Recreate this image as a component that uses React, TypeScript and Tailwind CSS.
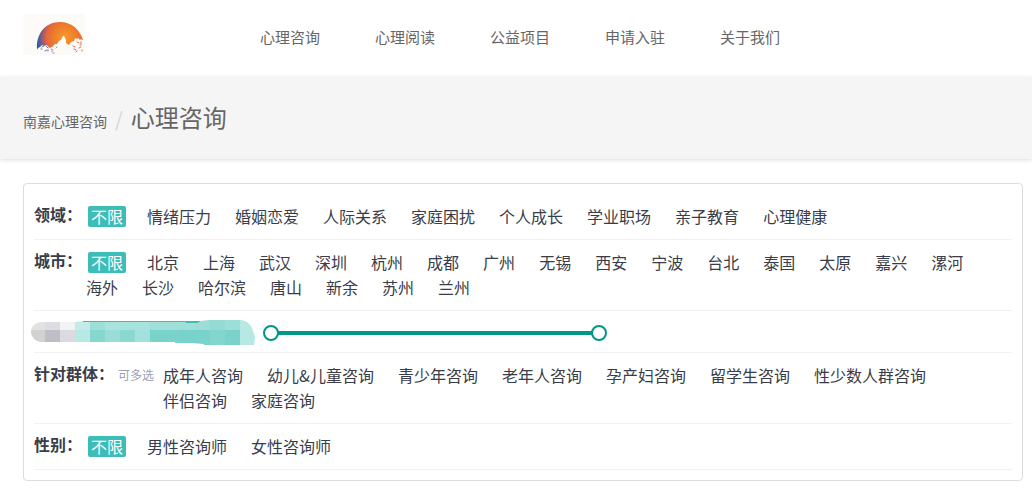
import { useState } from "react";

const navItems = ["心理咨询", "心理阅读", "公益项目", "申请入驻", "关于我们"];
const fields = ["不限", "情绪压力", "婚姻恋爱", "人际关系", "家庭困扰", "个人成长", "学业职场", "亲子教育", "心理健康"];
const cities = [
  "不限", "北京", "上海", "武汉", "深圳", "杭州", "成都", "广州", "无锡", "西安", "宁波", "台北",
  "泰国", "太原", "嘉兴", "漯河", "海外", "长沙", "哈尔滨", "唐山", "新余", "苏州", "兰州",
];
const groups = [
  "成年人咨询", "幼儿&儿童咨询", "青少年咨询", "老年人咨询", "孕产妇咨询", "留学生咨询",
  "性少数人群咨询", "伴侣咨询", "家庭咨询",
];
const genders = ["不限", "男性咨询师", "女性咨询师"];

function Logo() {
  return (
    <svg width="62" height="41" viewBox="0 0 62 41" role="img" aria-label="南嘉心理咨询">
      <defs>
        <radialGradient id="sun" gradientUnits="userSpaceOnUse" cx="42" cy="23" r="31">
          <stop offset="0" stopColor="#f59a2c" />
          <stop offset="0.4" stopColor="#ee7a2b" />
          <stop offset="0.6" stopColor="#e2673a" />
          <stop offset="0.75" stopColor="#8d5a7c" />
          <stop offset="0.9" stopColor="#2c5fae" />
          <stop offset="1" stopColor="#1c55a8" />
        </radialGradient>
      </defs>
      <rect width="62" height="41" fill="#fdfbf7" />
      <path d="M14 35C13 19 23 8 37 8c12 0 20 8 23 18l1 7-1 3H14Z" fill="url(#sun)" />
      <path
        d="M14 36l1-2 2-1 2-2 2 1 2-1 2 1 1 2 3-1 3-3 2 0 2-3 2-1 2-4 1 0 2 4 0 3 3 2 2-3 3-1 1-3 2 1 1-1 2 2 1-1 1 1 2 0v15H14Z"
        fill="#fdfbf7"
      />
      <g fill="none" strokeLinecap="round" strokeWidth="1">
        <path d="M19 33l2-1M23 32l2 2M22 37l2-1M18 35h1M25 36v1" stroke="#6471a9" />
        <path d="M28 35l2 1M30 39h1M33 34l1-1M29 37v1" stroke="#c47d98" />
        <path d="M50 32l2 1M54 28l2 1M58 28v2M51 35l2 1M56 34l2-1M53 38l1-1M59 36v1M57 31h1" stroke="#dc6a50" />
      </g>
    </svg>
  );
}

const topCells = ["#e2e2e3", "#dcdce2", "#f2f3f3", "#c3ece9", "#9adfd8", "#a9e3df", "#a6e3de", "#a6e3de", "#9fdfd9", "#9fdfd9", "#9fdfd9", "#9cddd7", "#93dbd4", "#9cded8", "#b6e8e4"];
const bottomCells = ["#d2d2d3", "#bebfc6", "#dbdae0", "#b8e9e5", "#86d7cf", "#9addd7", "#8ad8d1", "#a3e2dc", "#79d3cb", "#79d3cb", "#77d2ca", "#79d3cb", "#82d6ce", "#79d3cb", "#b6e8e4"];

function Mosaic() {
  return (
    <svg width="224" height="25" viewBox="0 0 224 25" className="shrink-0" aria-hidden="true">
      <defs>
        <clipPath id="brush">
          <path d="M11 2H44L53 1H169L179 0H210C216 1 221 5 222 11L224 17 223 25H173V24L160 23H144V22H11C5 22 0 17 0 12 0 6 5 2 11 2Z" />
        </clipPath>
      </defs>
      <g clipPath="url(#brush)">
        {topCells.map((fill, i) => (
          <rect key={i} x={i * 15 - 1} y="0" width="15" height="10" fill={fill} />
        ))}
        {bottomCells.map((fill, i) => (
          <rect key={i} x={i * 15 - 1} y="10" width="15" height="15" fill={fill} />
        ))}
        <path d="M52 1H169V2H167V3H155V2H52Z" fill="#3cbdb7" />
      </g>
    </svg>
  );
}

function Options({ items, multiple = false }: { items: string[]; multiple?: boolean }) {
  const [selected, setSelected] = useState<string[]>(multiple ? [] : [items[0]]);

  const choose = (item: string) => {
    if (!multiple) setSelected([item]);
    else setSelected((s) => (s.includes(item) ? s.filter((x) => x !== item) : [...s, item]));
  };

  return (
    <ul className="flex min-w-0 flex-1 flex-wrap gap-x-[18px]">
      {items.map((item) => (
        <li key={item} className={item === "不限" ? "ml-[5px] flex h-[25px] items-center" : "flex h-[25px] items-center"}>
          <button
            type="button"
            aria-pressed={selected.includes(item)}
            onClick={() => choose(item)}
            className={
              selected.includes(item)
                ? "h-[21px] rounded-xs bg-[#3cbdb7] px-[3px] leading-[21px] text-white"
                : "h-[21px] px-[3px] leading-[21px]"
            }
          >
            {item}
          </button>
        </li>
      ))}
    </ul>
  );
}

function FilterRow({ label, hint, items }: { label: string; hint?: string; items: string[] }) {
  return (
    <div role="group" aria-label={label} className="flex border-b border-[#f2f2f2] py-[10px]">
      <div className={hint ? "flex w-[126px] shrink-0 gap-1" : "flex w-[49px] shrink-0"}>
        <strong className="leading-5 font-bold whitespace-nowrap">{label}：</strong>
        {hint && <span className="text-xs leading-6 whitespace-nowrap text-[#9aa0b0]">{hint}</span>}
      </div>
      <Options items={items} multiple={Boolean(hint)} />
    </div>
  );
}

const rangeClass =
  "pointer-events-none absolute inset-0 m-0 h-4 w-full appearance-none bg-transparent [&::-webkit-slider-thumb]:pointer-events-auto [&::-webkit-slider-thumb]:size-4 [&::-webkit-slider-thumb]:appearance-none [&::-webkit-slider-thumb]:rounded-full [&::-webkit-slider-thumb]:border-2 [&::-webkit-slider-thumb]:border-solid [&::-webkit-slider-thumb]:border-[#009688] [&::-webkit-slider-thumb]:bg-white";

function RangeRow() {
  const [low, setLow] = useState(0);
  const [high, setHigh] = useState(100);
  return (
    <div className="flex items-center gap-2 border-b border-[#f2f2f2] pt-[9px] pb-[7px]">
      <div className="-ml-[3px] flex h-[25px] shrink-0 items-center">
        <Mosaic />
      </div>
      <div className="relative h-4 w-[344px]">
        <div className="mx-2 flex h-4 items-center bg-white">
          <div className="relative h-1 w-full bg-gray-200">
            <div className="absolute inset-y-0 bg-[#009688]" style={{ left: `${low}%`, right: `${100 - high}%` }} />
          </div>
        </div>
        <input
          type="range"
          aria-label="最低"
          value={low}
          onChange={(e) => setLow(Math.min(Number(e.target.value), high))}
          className={rangeClass}
        />
        <input
          type="range"
          aria-label="最高"
          value={high}
          onChange={(e) => setHigh(Math.max(Number(e.target.value), low))}
          className={rangeClass}
        />
      </div>
    </div>
  );
}

export default function App() {
  return (
    <div className="bg-white font-['Noto_Sans_CJK_SC',sans-serif] text-base text-[#393d49]">
      <header className="flex h-[77px] items-center px-[23px] pb-2">
        <a href="#" className="w-[237px] shrink-0">
          <Logo />
        </a>
        <nav className="flex gap-[55px] pt-[6px] text-[15px] text-[#666]">
          {navItems.map((item) => (
            <a key={item} href="#" className="whitespace-nowrap">
              {item}
            </a>
          ))}
        </nav>
      </header>

      <div className="flex h-[82px] items-center bg-[#f5f5f5] px-[23px] pb-[2px] text-[#666] shadow-[0_1px_4px_rgba(0,0,0,0.14)]">
        <div className="flex items-baseline gap-2">
          <a href="#" className="text-sm">
            南嘉心理咨询
          </a>
          <span className="text-xl text-[#d5d5d5]">/</span>
          <h1 className="text-2xl font-normal">心理咨询</h1>
        </div>
      </div>

      <main className="pt-6 pr-[9px] pb-[9px] pl-[23px]">
        <section className="rounded border border-[#dddde0] p-[10px]">
          <FilterRow label="领域" items={fields} />
          <FilterRow label="城市" items={cities} />
          <RangeRow />
          <FilterRow label="针对群体" hint="可多选" items={groups} />
          <FilterRow label="性别" items={genders} />
        </section>
      </main>
    </div>
  );
}
